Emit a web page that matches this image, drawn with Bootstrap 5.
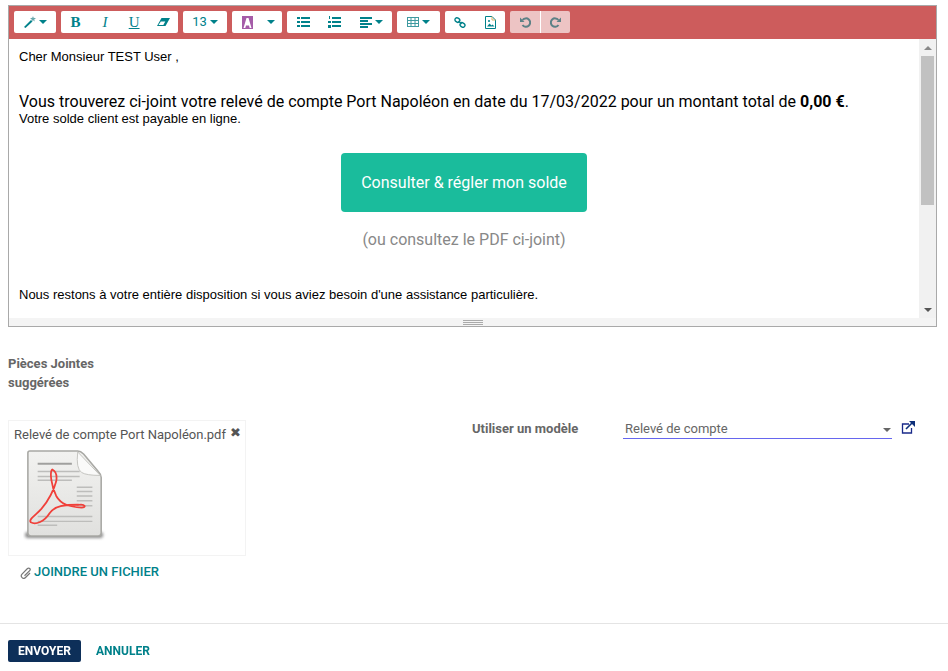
<!DOCTYPE html>
<html lang="fr"><head><meta charset="utf-8">
<link rel="stylesheet" href="https://cdn.jsdelivr.net/npm/bootstrap@5.3.0/dist/css/bootstrap.min.css">
<style>
html,body{margin:0;background:#fff;overflow:hidden}
body{font-family:Roboto,sans-serif;font-size:13px;color:#4c4c4c;width:948px;height:671px;padding:5px 11px 0 8px}
.edbox{border:1px solid #a9a9a9;height:322px}
.tbar{background:#cd5c5c;height:33px;padding:5px 5px 0;gap:5px}
.tgrp{background:#fff;border-radius:2px;height:22px;color:#00818a}
.tgrp svg{display:block}
.tbtn{height:22px;flex:0 0 auto;display:flex;align-items:center;justify-content:center;gap:3px;font-size:13px}
.tcar{width:0;height:0;border:4px solid transparent;border-top-color:#00818a;border-bottom:0}
.tdis{background:#edc4c4}
.tdis .tbtn{width:30px}
.tdis .tbtn+.tbtn{border-left:1px solid #fff}
.w-bi{width:29.25px}.w-l{width:31px}.w-a{width:43px}.w-p{width:30px}
.pl1{padding-left:1px}
.g42{width:42px}.g117{width:117px}.g44{width:44px}.g50{width:50px;padding:0 7px 0 10px}.g105{width:105px}.g43{width:43px}.g60{width:60px}
.serif-b{font-family:"Liberation Serif",serif;font-size:15px}
.edmain{height:279px}
.edtext{width:911px;padding:0 10px;color:#000;font-family:"Liberation Sans",sans-serif;font-size:13px;overflow:hidden}
.l1{margin-top:10px;line-height:15px}
.l2{margin-top:28px;font-family:Roboto,sans-serif;font-size:16px;line-height:19px}
.l3{line-height:15px}
.paybtn{width:246px;height:59px;background:#1abc9c;color:#fff;border-radius:4px;font-family:Roboto,sans-serif;font-size:16px;margin:27px auto 0;display:flex;align-items:center;justify-content:center}
.pdfnote{text-align:center;color:#888;font-family:Roboto,sans-serif;font-size:16px;margin-top:18px;line-height:19px}
.l4{margin-top:38px;line-height:15px}
.sbar{width:17px;background:#f1f1f1;display:flex;flex-direction:column;align-items:center}
.sup{height:17px;display:flex;align-items:center;justify-content:center}
.sthumb{width:13px;height:149px;background:#c1c1c1}
.sdown{margin-top:auto;height:17px;display:flex;align-items:center;justify-content:center}
.resz{height:8px;background:#f4f4f4;display:flex;justify-content:center;align-items:center}
.grip{width:20px;height:5px;border-top:1px solid #aaa;border-bottom:1px solid #aaa}
.grip::after{content:"";display:block;height:1px;margin-top:1px;background:#aaa}
.lbl{font-weight:700;color:#666}
.sugg{margin-top:27px;line-height:19px;width:100px}
.mid{margin-top:27px}
.attach{width:238px;height:136px;border:1px solid #f3f3f3;padding:0 5px;margin-top:1px}
.attname{margin-top:6px;line-height:15px;color:#555;gap:4px;white-space:nowrap}
.xmark{color:#555;font-size:13px;line-height:11px}
.pdfico{display:block;margin:2px 0 0 9px}
.join{color:#00818a;font-weight:500;font-size:13px;text-transform:uppercase;margin:9px 0 0 12px;line-height:14px;gap:2px}
.modele{margin-left:226px}
.mlab{width:150px;line-height:17px;margin-top:1px}
.minput{width:269px;height:20px;border-bottom:1px solid #6666ee;padding-left:2px;line-height:20px;color:#666;margin-left:1px}
.mcar{width:0;height:0;border:4px solid transparent;border-top-color:#666;border-bottom:0;margin:3px 1px 0 auto;align-self:center}
.mext{margin:2px 0 0 9px}
.foot{position:fixed;left:0;right:0;top:623px;border-top:1px solid #e4e4e4;padding:16px 8px 0;gap:15px}
.send{background:#0d2f59;color:#fff;font-weight:700;font-size:12px;height:22px;width:73px;border-radius:2px;display:flex;align-items:center;justify-content:center}
.cancel{color:#00818a;font-weight:700;font-size:12px;display:flex;align-items:center}
</style></head><body>
<div class="edbox">
 <div class="d-flex tbar">
  <div class="tgrp g42 d-flex justify-content-center align-items-center"><div class="tbtn"><svg width="12" height="12" viewBox="0 0 12 12"><path d="M0 11 7 4l1.500 1.500-7 6.500z" fill="#00818a"/><path d="M9 0l.6 1.800L12 2.200l-1.800 1.200.6 2-1.800-1.100-1.700 1.100.5-2L6 2.200l2.300-.4z" fill="#6aa9ad"/></svg><span class="tcar"></span></div></div>
  <div class="tgrp g117 d-flex align-items-center">
   <span class="tbtn w-bi serif-b fw-bold">B</span><span class="tbtn w-bi serif-b fst-italic">I</span><span class="tbtn w-bi serif-b text-decoration-underline">U</span>
   <span class="tbtn w-bi"><svg width="13" height="8" viewBox="0 0 13 8"><path d="M4.500 0H13L8.500 8H0z" fill="#00818a"/><path d="M1.500 7 3.800 3.500h4.500L6.300 7z" fill="#fff"/></svg></span></div>
  <div class="tgrp g44 d-flex align-items-center justify-content-center"><div class="tbtn">13<span class="tcar"></span></div></div>
  <div class="tgrp g50 d-flex align-items-center justify-content-between"><svg width="11" height="13" viewBox="0 0 11 13"><rect width="11" height="13" fill="#a55ca8"/><path d="M1.500 12 4.500 2h2l3 10H7.700L7 9.500H4L3.300 12z" fill="#fff"/></svg><span class="tcar"></span></div>
  <div class="tgrp g105 d-flex align-items-center pl1">
   <span class="tbtn w-l"><svg width="13" height="10" viewBox="0 0 13 10" fill="#00818a"><rect width="3" height="2"/><rect x="4" width="9" height="2"/><rect y="4" width="3" height="2"/><rect x="4" y="4" width="9" height="2"/><rect y="8" width="3" height="2"/><rect x="4" y="8" width="9" height="2"/></svg></span>
   <span class="tbtn w-l"><svg width="13" height="12" viewBox="0 0 13 12" fill="#00818a"><rect x="1" width="1" height="3"/><rect x="4" y="1" width="9" height="2"/><rect y="5" width="3" height="2"/><rect x="4" y="5" width="9" height="2"/><rect y="9" width="3" height="3"/><rect x="4" y="9" width="9" height="2"/></svg></span>
   <div class="tbtn w-a"><svg width="12" height="11" viewBox="0 0 12 11" fill="#00818a"><rect width="12" height="2"/><rect y="3" width="8" height="2"/><rect y="6" width="12" height="2"/><rect y="9" width="8" height="2"/></svg><span class="tcar"></span></div></div>
  <div class="tgrp g43 d-flex align-items-center justify-content-center"><div class="tbtn"><svg width="12" height="10" viewBox="0 0 12 10" fill="none" stroke="#3f9aa0"><rect x=".5" y=".5" width="11" height="9"/><path d="M4 0v10M8 0v10M0 3.500h12M0 6.500h12"/></svg><span class="tcar"></span></div></div>
  <div class="tgrp g60 d-flex align-items-center">
   <span class="tbtn w-p"><svg width="12" height="11" viewBox="0 0 12 11" fill="none" stroke="#00818a" stroke-width="1.400"><rect x=".8" y=".8" width="5" height="4" rx="2" transform="rotate(35 3 3)"/><rect x="6" y="6" width="5" height="4" rx="2" transform="rotate(35 8.500 8)"/><path d="M4.500 4l3 3"/></svg></span>
   <span class="tbtn w-p"><svg width="11" height="13" viewBox="0 0 11 13"><path d="M.5.500h6.500l3.500 3.500v8.500H.5z" fill="#fff" stroke="#00818a"/><path d="M7 .5V4h3.500" fill="none" stroke="#d9b26a"/><path d="M2 10.500l2.500-3 2 2 1-1 2 2z" fill="#00818a"/><circle cx="4" cy="5" r="1" fill="#00818a"/></svg></span></div>
  <div class="tgrp tdis d-flex">
   <div class="tbtn"><svg width="11" height="11" viewBox="0 0 11 11" fill="none" stroke="#5d8186" stroke-width="2"><path d="M2.600 3A4.200 4.200 0 1 1 2.500 8"/><path d="M0 .5V5h4.500z" fill="#5d8186" stroke="none"/></svg></div>
   <div class="tbtn"><svg width="11" height="11" viewBox="0 0 11 11" fill="none" stroke="#5d8186" stroke-width="2"><path d="M8.400 3A4.200 4.200 0 1 0 8.500 8"/><path d="M11 .5V5H6.500z" fill="#5d8186" stroke="none"/></svg></div></div>
 </div>
 <div class="d-flex edmain">
  <div class="edtext">
   <div class="l1">Cher Monsieur TEST User ,</div>
   <div class="l2">Vous trouverez ci-joint votre relevé de compte Port Napoléon en date du 17/03/2022 pour un montant total de <b>0,00 €</b>.</div>
   <div class="l3">Votre solde client est payable en ligne.</div>
   <div class="paybtn">Consulter &amp; régler mon solde</div>
   <div class="pdfnote">(ou consultez le PDF ci-joint)</div>
   <div class="l4">Nous restons à votre entière disposition si vous aviez besoin d'une assistance particulière.</div>
  </div>
  <div class="sbar"><div class="sup"><svg width="8" height="4"><path d="M4 0l4 4H0z" fill="#888"/></svg></div><div class="sthumb"></div><div class="sdown"><svg width="8" height="4"><path d="M0 0h8L4 4z" fill="#555"/></svg></div></div>
 </div>
 <div class="resz"><div class="grip"></div></div>
</div>
<div class="lbl sugg">Pièces Jointes suggérées</div>
<div class="d-flex mid">
 <div>
  <div class="attach">
   <div class="d-flex attname"><span>Relevé de compte Port Napoléon.pdf</span><span class="xmark">✖</span></div>
   <svg class="pdfico" width="86" height="100" viewBox="0 0 88 102"><defs><linearGradient id="pg" x1="0" y1="0" x2="0" y2="1"><stop offset="0" stop-color="#f2f2f0"/><stop offset="1" stop-color="#e0e0de"/></linearGradient><filter id="bl" x="-20%" y="-50%" width="140%" height="200%"><feGaussianBlur stdDeviation="1.800"/></filter><filter id="sb"><feGaussianBlur stdDeviation=".4"/></filter></defs><rect x="2" y="90" width="80" height="6" rx="3" fill="#8d8d8d" filter="url(#bl)"/><path d="M7 7h49q3 0 6 3l15 18q3 3 3 6v57q0 3-3 3H8q-3 0-3-3V9q0-2 2-2z" fill="url(#pg)" stroke="#a8a8a4" stroke-width="1.600"/><path d="M56 8q-2 17 4 21 5 3 19 3z" fill="#fafaf9" stroke="#c4c4c0"/><g filter="url(#sb)"><path d="M15 20h35" stroke="#a0a09e" stroke-width="2"/><path d="M15 28h43M15 33h43M15 37h35M55 44h16M55 48.500h16M55 53h16M55 58h16M55 63h16M15 74h56M15 79h56M15 83h20" stroke="#bdbdbb" stroke-width="1.500"/></g><path d="M30 26c-3 2-1 17 4 27 5 9 14 11 26 12 5 0 4-4-3-3-14 0-25 1-30 9-5 8-14 12-19 9-3-3 6-8 11-14 7-8 13-20 15-28 1-6 0-10-4-12z" fill="none" stroke="#f0403a" stroke-width="1.800"/></svg>
  </div>
  <div class="d-flex align-items-center join"><svg width="12" height="13" viewBox="0 0 12 13" fill="none" stroke="#777" stroke-width="1.200"><path d="M10 7 5.500 11.500a2.300 2.300 0 0 1-3.500-3.300L7.500 2.500a1.500 1.500 0 0 1 2.200 2.200L4.500 9.800"/></svg><span>Joindre un fichier</span></div>
 </div>
 <div class="d-flex modele align-items-start">
  <div class="lbl mlab">Utiliser un modèle</div>
  <div class="minput d-flex"><span>Relevé de compte</span><span class="mcar"></span></div>
  <svg class="mext" width="14" height="13" viewBox="0 0 14 13" fill="none"><path d="M8 3H1.500v9h9V7" stroke="#1a2a8a" stroke-width="1.300"/><path d="M5 8 11 2" stroke="#0d2f7a" stroke-width="1.600"/><path d="M8 0h6v6z" fill="#0d2f7a"/></svg>
 </div>
</div>
<div class="d-flex foot"><div class="send">ENVOYER</div><div class="cancel">ANNULER</div></div>
</body></html>
